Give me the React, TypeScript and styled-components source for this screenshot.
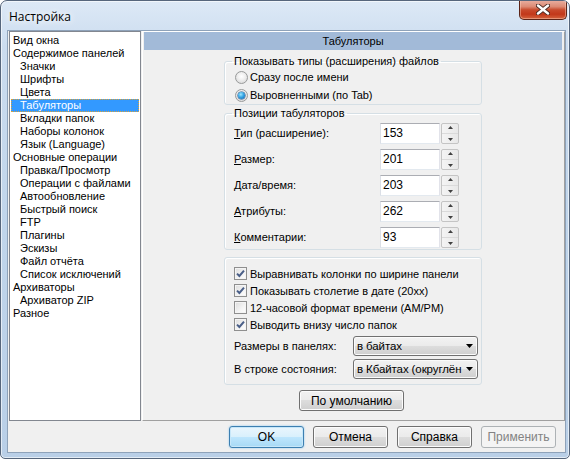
import React from "react";
import styled, { createGlobalStyle, css } from "styled-components";

const Global = createGlobalStyle`
  html, body { margin: 0; padding: 0; background: #ffffff; }
  body { font-family: "Liberation Sans", Arial, sans-serif; font-size: 11px; color: #000; }
  * { box-sizing: border-box; }
`;

const Window = styled.div`
  width: 570px;
  height: 459px;
  display: flex;
  flex-direction: column;
  border: 1px solid #56667c;
  border-radius: 7px 7px 5px 5px;
  background: linear-gradient(180deg, #dde9f6 0%, #cbdcef 10%, #c0d5eb 50%, #b9cfe7 100%);
  box-shadow: inset 0 0 0 1px rgba(255, 255, 255, 0.6);
  padding: 0 3px 5px 6px;
  overflow: hidden;
`;

const TitleBar = styled.div`
  height: 29px;
  flex: none;
  display: flex;
  align-items: center;
  justify-content: space-between;
`;

const Title = styled.div`
  padding-left: 2px;
  padding-top: 2px;
  font-family: "Open Sans", "Noto Sans", sans-serif;
  font-size: 12px;
  color: #000;
  text-shadow: 0 0 6px #ffffff, 0 0 10px #ffffff;
`;

const CloseBtn = styled.div`
  align-self: flex-start;
  margin-top: -1px;
  margin-right: -1px;
  width: 48px;
  height: 20px;
  border: 1px solid #5b2417;
  border-top: none;
  border-radius: 0 0 5px 5px;
  background: linear-gradient(180deg, #eab1a3 0%, #dc8a74 35%, #c84a2c 52%, #c2381a 75%, #d4643e 100%);
  box-shadow: inset 0 0 0 1px rgba(255, 210, 190, 0.45);
  display: flex;
  align-items: center;
  justify-content: center;
`;

const Client = styled.div`
  flex: 1;
  border: 1px solid #8ea2b9;
  background: #f0f0f0;
  display: flex;
  flex-direction: column;
  padding: 0 0 4px 1px;
`;

const MainRow = styled.div`
  height: 390px;
  display: flex;
  gap: 1px;
`;

const Tree = styled.div`
  width: 132px;
  height: 100%;
  background: #ffffff;
  border: 1px solid #828790;
  padding: 1px 1px 0 1px;
  display: flex;
  flex-direction: column;
`;

const TreeItem = styled.div<{ $level: number; $selected?: boolean }>`
  height: 13px;
  line-height: 13px;
  padding-left: ${(p) => (p.$level ? 9 : 2)}px;
  white-space: nowrap;
  color: #000;
  &:first-child { margin-top: 1px; }
  ${(p) =>
    p.$selected &&
    css`
      background: #3399ff;
      color: #ffffff;
      outline: 1px dotted #d8a23a;
      outline-offset: -1px;
    `}
`;

const Panel = styled.div`
  flex: 1;
  height: 100%;
  border-style: solid;
  border-width: 1px;
  border-color: #ffffff #a0a0a0 #a0a0a0 #ffffff;
  padding: 0 2px 0 1px;
  display: flex;
  flex-direction: column;
  align-items: center;
`;

const PanelHeader = styled.div`
  align-self: stretch;
  height: 18px;
  background: #a2bad8;
  text-align: center;
  line-height: 18px;
  color: #000;
`;

const Group = styled.fieldset<{ $mt: number; $pt?: number; $pb?: number }>`
  width: 258px;
  min-width: 0;
  margin: ${(p) => p.$mt}px 0 0 0;
  padding: ${(p) => p.$pt ?? 0}px 9px ${(p) => p.$pb ?? 0}px 9px;
  border: 1px solid #d5dfe5;
  border-radius: 3px;
  box-shadow: inset 1px 1px 0 #ffffff;
`;

const Legend = styled.legend`
  padding: 0 2px;
  margin-left: -2px;
  line-height: 13px;
  color: #000;
`;

const RadioRow = styled.div`
  height: 18px;
  display: flex;
  align-items: center;
  gap: 2px;
  padding-left: 1px;
`;

const RadioCircle = styled.span<{ $on?: boolean }>`
  width: 13px;
  height: 13px;
  border-radius: 50%;
  border: 1px solid #989a9a;
  background: radial-gradient(circle at 50% 40%, #ffffff 0%, #f0f0f0 40%, #d2d2d2 100%);
  display: flex;
  align-items: center;
  justify-content: center;
  flex: none;
  &::after {
    content: "";
    display: ${(p) => (p.$on ? "block" : "none")};
    width: 7px;
    height: 7px;
    border-radius: 50%;
    background: radial-gradient(circle at 40% 35%, #9fe6ff 0%, #36a6e4 45%, #0d58a8 100%);
    box-shadow: 0 0 0 0.5px #1b4f86;
  }
`;

const SpinGrid = styled.div`
  display: grid;
  grid-template-columns: 145px 60px 18px;
  column-gap: 1px;
  row-gap: 5px;
  align-items: center;
`;

const FieldLabel = styled.div`
  line-height: 13px;
  white-space: nowrap;
`;

const TextBox = styled.div`
  height: 21px;
  background: #ffffff;
  border: 1px solid;
  border-color: #abadb3 #e2e3ea #e3e9ef #dbdfe6;
  padding-left: 2px;
  line-height: 19px;
  font-size: 12px;
`;

const Spin = styled.div`
  height: 21px;
  display: flex;
  flex-direction: column;
  border: 1px solid #c4c4c4;
  border-radius: 2px;
  background: linear-gradient(90deg, #f4f4f4, #e8e8e8);
`;

const SpinHalf = styled.div<{ $top?: boolean }>`
  flex: 1;
  display: flex;
  align-items: ${(p) => (p.$top ? "flex-start" : "flex-end")};
  padding: ${(p) => (p.$top ? "2px 0 0 0" : "0 0 2px 0")};
  justify-content: center;
  ${(p) => p.$top && css`border-bottom: 1px solid #dadada;`}
`;

const CheckRow = styled.div`
  height: 17px;
  display: flex;
  align-items: center;
  gap: 3px;
  white-space: nowrap;
`;

const CheckBox = styled.span`
  width: 13px;
  height: 13px;
  flex: none;
  border: 1px solid #8f8f8f;
  background: linear-gradient(135deg, #dcdcdc 0%, #f4f4f4 60%, #ffffff 100%);
  box-shadow: inset 0 0 0 1px #f4f4f4;
  display: flex;
  align-items: center;
  justify-content: center;
`;

const SelectRow = styled.div<{ $mt: number }>`
  margin-top: ${(p) => p.$mt}px;
  display: grid;
  grid-template-columns: 119px 125px;
  align-items: center;
`;

const Select = styled.div`
  height: 20px;
  border: 1px solid #707070;
  border-radius: 3px;
  background: linear-gradient(180deg, #f2f2f2 0%, #ebebeb 49%, #dddddd 50%, #cfcfcf 100%);
  box-shadow: inset 0 0 0 1px #fbfbfb;
  display: flex;
  align-items: center;
  padding: 0 4px 0 3px;
  gap: 3px;
  font-size: 11.5px;
`;

const SelectText = styled.span`
  flex: 1;
  min-width: 0;
  white-space: nowrap;
  letter-spacing: -0.1px;
`;

const btnBase = css`
  height: 21px;
  border: 1px solid #707070;
  border-radius: 3px;
  background: linear-gradient(180deg, #f2f2f2 0%, #ebebeb 49%, #dddddd 50%, #cfcfcf 100%);
  box-shadow: inset 0 0 0 1px #fcfcfc;
  display: flex;
  align-items: center;
  justify-content: center;
  font-size: 12px;
  color: #000;
`;

const DefaultsButton = styled.div`
  ${btnBase};
  margin-top: 5px;
  width: 105px;
  margin-left: -3px;
`;

const ButtonRow = styled.div`
  margin-top: 5px;
  height: 22px;
  display: flex;
  justify-content: flex-end;
  gap: 9px;
  padding-right: 9px;
`;

const DialogButton = styled.div<{ $variant?: "default" | "disabled" }>`
  ${btnBase};
  width: 75px;
  height: 22px;
  ${(p) =>
    p.$variant === "default" &&
    css`
      border-color: #3c7fb1;
      background: linear-gradient(180deg, #eaf6fd 0%, #d9f0fc 49%, #bee6fd 50%, #a7d9f5 100%);
      box-shadow: inset 0 0 0 1px #c7e7f9, 0 0 2px #7dc3f0;
    `}
  ${(p) =>
    p.$variant === "disabled" &&
    css`
      border-color: #adb2b5;
      background: #f4f4f4;
      box-shadow: none;
      color: #838383;
    `}
`;

const tree: { t: string; l: number; s?: boolean }[] = [
  { t: "Вид окна", l: 0 },
  { t: "Содержимое панелей", l: 0 },
  { t: "Значки", l: 1 },
  { t: "Шрифты", l: 1 },
  { t: "Цвета", l: 1 },
  { t: "Табуляторы", l: 1, s: true },
  { t: "Вкладки папок", l: 1 },
  { t: "Наборы колонок", l: 1 },
  { t: "Язык (Language)", l: 1 },
  { t: "Основные операции", l: 0 },
  { t: "Правка/Просмотр", l: 1 },
  { t: "Операции с файлами", l: 1 },
  { t: "Автообновление", l: 1 },
  { t: "Быстрый поиск", l: 1 },
  { t: "FTP", l: 1 },
  { t: "Плагины", l: 1 },
  { t: "Эскизы", l: 1 },
  { t: "Файл отчёта", l: 1 },
  { t: "Список исключений", l: 1 },
  { t: "Архиваторы", l: 0 },
  { t: "Архиватор ZIP", l: 1 },
  { t: "Разное", l: 0 },
];

const tabs: { k: string; rest: string; v: string }[] = [
  { k: "Т", rest: "ип (расширение):", v: "153" },
  { k: "Р", rest: "азмер:", v: "201" },
  { k: "Д", rest: "ата/время:", v: "203" },
  { k: "А", rest: "трибуты:", v: "262" },
  { k: "К", rest: "омментарии:", v: "93" },
];

const checks: { t: string; on: boolean }[] = [
  { t: "Выравнивать колонки по ширине панели", on: true },
  { t: "Показывать столетие в дате (20xx)", on: true },
  { t: "12-часовой формат времени (AM/PM)", on: false },
  { t: "Выводить внизу число папок", on: true },
];

const CloseIcon = () => (
  <svg width="14" height="11" viewBox="0 0 14 11">
    <path d="M2 1.5 L12 9.5 M12 1.5 L2 9.5" stroke="#4a2a22" strokeWidth="4.2" strokeLinecap="round" />
    <path d="M2 1.5 L12 9.5 M12 1.5 L2 9.5" stroke="#ffffff" strokeWidth="2.4" strokeLinecap="round" />
  </svg>
);

const Tri = ({ up }: { up?: boolean }) => (
  <svg width="5" height="3" viewBox="0 0 5 3">
    <path d={up ? "M0 3 L2.5 0 L5 3 Z" : "M0 0 L5 0 L2.5 3 Z"} fill="#404040" />
  </svg>
);

const DropArrow = () => (
  <svg width="7" height="4" viewBox="0 0 7 4" style={{ flex: "none" }}>
    <path d="M0 0 L7 0 L3.5 4 Z" fill="#000" />
  </svg>
);

const CheckMark = () => (
  <svg width="9" height="9" viewBox="0 0 9 9">
    <path d="M1 4.6 L3.4 7 L8 1.6" fill="none" stroke="#4a5f88" strokeWidth="2" strokeLinejoin="miter" />
  </svg>
);

export default function App() {
  return (
    <>
      <Global />
      <Window>
        <TitleBar>
          <Title>Настройка</Title>
          <CloseBtn>
            <CloseIcon />
          </CloseBtn>
        </TitleBar>
        <Client>
          <MainRow>
            <Tree>
              {tree.map((it) => (
                <TreeItem key={it.t} $level={it.l} $selected={it.s}>
                  {it.t}
                </TreeItem>
              ))}
            </Tree>
            <Panel>
              <PanelHeader>Табуляторы</PanelHeader>
              <Group $mt={5}>
                <Legend>Показывать типы (расширения) файлов</Legend>
                <RadioRow>
                  <RadioCircle />
                  <span>Сразу после имени</span>
                </RadioRow>
                <RadioRow>
                  <RadioCircle $on />
                  <span>Выровненными (по Tab)</span>
                </RadioRow>
              </Group>
              <Group $mt={2} $pt={3} $pb={1}>
                <Legend>Позиции табуляторов</Legend>
                <SpinGrid>
                  {tabs.map((r) => (
                    <React.Fragment key={r.v}>
                      <FieldLabel>
                        <u>{r.k}</u>
                        {r.rest}
                      </FieldLabel>
                      <TextBox>{r.v}</TextBox>
                      <Spin>
                        <SpinHalf $top>
                          <Tri up />
                        </SpinHalf>
                        <SpinHalf>
                          <Tri />
                        </SpinHalf>
                      </Spin>
                    </React.Fragment>
                  ))}
                </SpinGrid>
              </Group>
              <Group $mt={7} $pt={7} $pb={5}>
                {checks.map((c) => (
                  <CheckRow key={c.t}>
                    <CheckBox>{c.on && <CheckMark />}</CheckBox>
                    <span>{c.t}</span>
                  </CheckRow>
                ))}
                <SelectRow $mt={3}>
                  <span>Размеры в панелях:</span>
                  <Select>
                    <SelectText>в байтах</SelectText>
                    <DropArrow />
                  </Select>
                </SelectRow>
                <SelectRow $mt={3}>
                  <span>В строке состояния:</span>
                  <Select>
                    <SelectText>в Кбайтах (округлён</SelectText>
                    <DropArrow />
                  </Select>
                </SelectRow>
              </Group>
              <DefaultsButton>По умолчанию</DefaultsButton>
            </Panel>
          </MainRow>
          <ButtonRow>
            <DialogButton $variant="default">OK</DialogButton>
            <DialogButton>Отмена</DialogButton>
            <DialogButton>Справка</DialogButton>
            <DialogButton $variant="disabled">Применить</DialogButton>
          </ButtonRow>
        </Client>
      </Window>
    </>
  );
}
